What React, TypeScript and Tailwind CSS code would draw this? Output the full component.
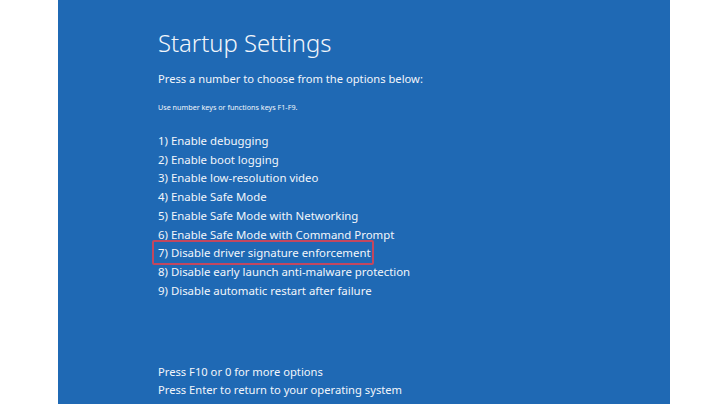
import React from 'react';

const options = [
  '1) Enable debugging',
  '2) Enable boot logging',
  '3) Enable low-resolution video',
  '4) Enable Safe Mode',
  '5) Enable Safe Mode with Networking',
  '6) Enable Safe Mode with Command Prompt',
  '7) Disable driver signature enforcement',
  '8) Disable early launch anti-malware protection',
  '9) Disable automatic restart after failure',
];

export default function App() {
  return (
    <div className="flex w-[728px] h-[404px] bg-white overflow-hidden" style={{ fontFamily: '"Noto Sans", "Open Sans", sans-serif' }}>
      <div className="w-[58px] shrink-0 bg-white" />
      <div className="w-[612px] shrink-0 bg-[#1f69b4] text-[#f2f6fb] pl-[100px] pt-[26px] flex flex-col">
        <h1 className="text-[23.8px] font-light leading-[34px]">Startup Settings</h1>
        <p className="text-[11.2px] leading-[16px] mt-[11px]">Press a number to choose from the options below:</p>
        <p className="text-[7.2px] leading-[12px] mt-[14px]">Use number keys or functions keys F1-F9.</p>
        <ul className="mt-[19px] text-[11.4px] leading-[18.7px]">
          {options.map((o, i) => (
            <li key={o} className="relative">
              {i === 6 && (
                <span className="absolute -left-[6px] -top-[4px] w-[222px] h-[25px] border-2 border-[#c2475f] rounded-[2px]" />
              )}
              {o}
            </li>
          ))}
        </ul>
        <div className="mt-auto mb-[4px] text-[11.2px] leading-[18.7px]">
          <p>Press F10 or 0 for more options</p>
          <p>Press Enter to return to your operating system</p>
        </div>
      </div>
      <div className="flex-1 bg-white" />
    </div>
  );
}
